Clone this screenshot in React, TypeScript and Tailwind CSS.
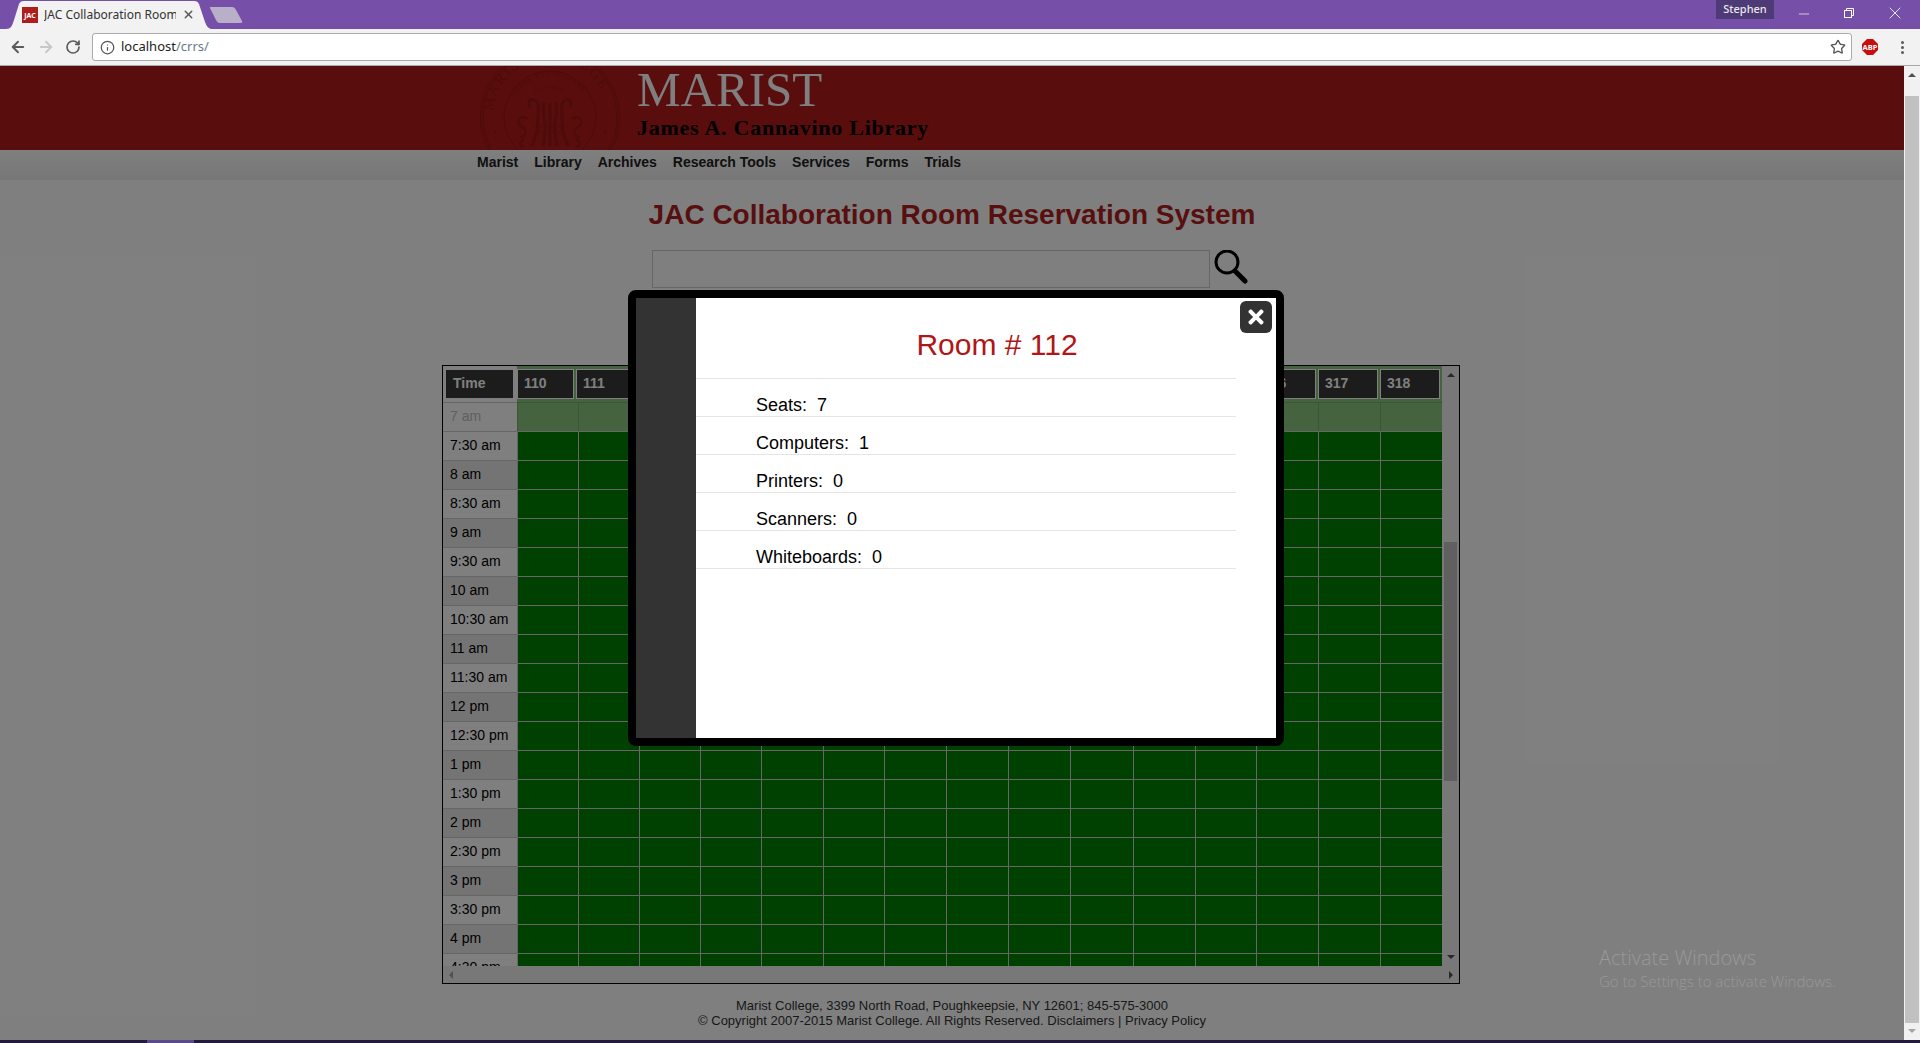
import React from 'react';
import { ArrowLeft, ArrowRight, RotateCw, Star, Info, X, Minus } from 'lucide-react';
import { FaTimes } from 'react-icons/fa';

const times = [
  '7 am', '7:30 am', '8 am', '8:30 am', '9 am', '9:30 am', '10 am', '10:30 am', '11 am', '11:30 am', '12 pm',
  '12:30 pm', '1 pm', '1:30 pm', '2 pm', '2:30 pm', '3 pm', '3:30 pm', '4 pm', '4:30 pm', '5 pm',
];
const rooms = ['110', '111', '112', '113', '114', '115', '116', '117', '312', '313', '314', '315', '316', '317', '318'];
const amenities = [
  ['Seats', 7],
  ['Computers', 1],
  ['Printers', 0],
  ['Scanners', 0],
  ['Whiteboards', 0],
];
const navLinks = ['Marist', 'Library', 'Archives', 'Research Tools', 'Services', 'Forms', 'Trials'];

const gridCols =
  'grid grid-cols-[74px_61px_61px_61px_61px_62px_61px_62px_62px_62px_63px_62px_61px_62px_62px_62px]';
const headCols =
  'grid grid-cols-[74px_59px_63px_61px_61px_62px_61px_62px_62px_62px_63px_62px_61px_62px_62px_62px]';

const BrowserChrome: React.FC = () => (
  <div className="font-['Noto_Sans',sans-serif]">
    {/* Tab strip */}
    <div className="relative h-[29px] bg-[#7650a8]">
      <svg className="absolute left-0 top-0" width="250" height="29" viewBox="0 0 250 29">
        <path d="M6 29 C11 29 12 26 14 20 L19 4 C20 2 21 1 24 1 L194 1 C197 1 198 2 199 4 L205 22 C207 27 209 29 212 29 Z" fill="#f2f2f2" />
        <path d="M210 8 C209.500 7.500 210 7 211 7 L232 7 C234 7 235 8 236 10 L242 21 C242.500 22 242 23 241 23 L220 23 C218 23 217 22 216 20 Z" fill="#b9afc9" />
      </svg>
      <div className="absolute left-[22px] top-[7px] flex h-4 w-4 items-center justify-center bg-[#b01c1c] text-[7px] font-bold leading-none text-white">
        JAC
      </div>
      <div className="absolute left-[44px] top-[6px] w-[132px] overflow-hidden whitespace-nowrap text-[12px] leading-[17px] text-[#333]">
        JAC Collaboration Rooms
      </div>
      <X className="absolute left-[182px] top-[8px] h-[13px] w-[13px] text-[#555]" strokeWidth={2.5} />
      <div className="absolute left-[1716px] top-0 flex h-[19px] w-[58px] items-center justify-center bg-[#4f3a78] text-[11px] font-medium text-[#e8e8e8]">
        Stephen
      </div>
      <Minus className="absolute left-[1796px] top-[6px] h-4 w-4 text-white" strokeWidth={1} />
      <svg className="absolute left-[1844px] top-[8px]" width="10" height="10" viewBox="0 0 10 10" fill="none" stroke="white">
        <path d="M2.500 2.500 V0.500 H9.500 V7.500 H7.500" />
        <rect x="0.500" y="2.500" width="7" height="7" />
      </svg>
      <X className="absolute left-[1885px] top-[3px] h-[20px] w-[20px] text-white" strokeWidth={1} />
    </div>
    {/* Toolbar */}
    <div className="flex h-[37px] items-center border-b border-[#a8a8a8] bg-[#f2f2f2] pl-[9px]">
      <ArrowLeft className="h-[18px] w-[18px] text-[#5a5a5a]" strokeWidth={2.5} />
      <ArrowRight className="ml-[10px] h-[18px] w-[18px] text-[#c8c8c8]" strokeWidth={2.5} />
      <RotateCw className="ml-[10px] h-[16px] w-[16px] text-[#5a5a5a]" strokeWidth={2.5} />
      <div className="ml-[11px] flex h-[28px] w-[1760px] items-center rounded-[3px] border border-[#aaa] bg-white pl-[7px]">
        <Info className="h-[15px] w-[15px] text-[#555]" strokeWidth={2} />
        <span className="ml-[6px] text-[13px] text-[#222]">localhost</span>
        <span className="text-[13px] text-[#6a7a85]">/crrs/</span>
        <Star className="ml-auto mr-[5px] h-4 w-4 text-[#555]" strokeWidth={2} />
      </div>
      <svg className="ml-[10px]" width="16" height="16" viewBox="0 0 16 16">
        <polygon points="5,0 11,0 16,5 16,11 11,16 5,16 0,11 0,5" fill="#c70d0d" />
        <text x="8" y="11" textAnchor="middle" fontSize="7.500" fontWeight="bold" fill="white">ABP</text>
      </svg>
      <div className="ml-[23px] flex flex-col gap-[2px]">
        <div className="h-[3px] w-[3px] rounded-full bg-[#5a5a5a]" />
        <div className="h-[3px] w-[3px] rounded-full bg-[#5a5a5a]" />
        <div className="h-[3px] w-[3px] rounded-full bg-[#5a5a5a]" />
      </div>
    </div>
  </div>
);

const Seal: React.FC = () => (
  <svg className="absolute left-[480px] top-[-19px]" width="140" height="140" viewBox="0 0 140 140" fill="none" stroke="#9c1616">
    <defs>
      <path id="outerRing" d="M12 70 A58 58 0 0 1 128 70" />
      <path id="innerRing" d="M29 70 A41 41 0 0 1 111 70" />
    </defs>
    <circle cx="70" cy="70" r="69.500" />
    <circle cx="70" cy="70" r="67" />
    <circle cx="70" cy="70" r="46" />
    <text fontFamily="'Liberation Serif', serif" fontSize="15" fill="#9c1616" stroke="none" letterSpacing="1.500">
      <textPath href="#outerRing" startOffset="3%">MARIST COLLEGE</textPath>
    </text>
    <text fontFamily="'Liberation Sans', sans-serif" fontSize="6" fill="#9c1616" stroke="none" letterSpacing="1">
      <textPath href="#innerRing" startOffset="16%">ORARE ET LABORARE</textPath>
    </text>
    <path d="M55 44 Q70 37 85 44" strokeWidth="1.500" strokeDasharray="1.500 3" />
    <path d="M50 60 C46 52 54 50 57 55 C61 62 56 72 58 82 L52 99 M64 55 C62 64 66 74 65 84 L63 99 M70 56 V99 M76 55 C78 64 74 74 75 84 L77 99 M90 60 C94 52 86 50 83 55 C79 62 84 72 82 82 L88 99" strokeWidth="3" />
    <path d="M54 80 H86 M54 85 H86" strokeWidth="1" strokeDasharray="3 3" />
    <path d="M48 72 C40 66 35 76 42 80 C48 83 46 90 40 90 M92 72 C100 66 105 76 98 80 C92 83 94 90 100 90 M44 92 C38 96 40 100 44 99 M96 92 C102 96 100 100 96 99" strokeWidth="2.200" />
    <circle cx="15" cy="85" r="1.500" fill="#9c1616" stroke="none" />
    <circle cx="125" cy="85" r="1.500" fill="#9c1616" stroke="none" />
  </svg>
);

const RoomGrid: React.FC = () => (
  <div className="ml-[442px] flex h-[619px] w-[1018px] flex-col border border-black">
    <div className="flex h-[600px]">
      <div className="w-[999px] overflow-hidden">
        {/* Column headers */}
        <div className={`${headCols} h-9 bg-[#8cc67e]`}>
          <div className="bg-white py-[3px] pl-[2px] pr-[3px]">
            <div className="flex h-[30px] items-center border border-white bg-[#383838] pb-[2px] pl-[7px] text-[14px] font-bold text-white">Time</div>
          </div>
          {rooms.map(room => (
            <div key={room} className="py-[3px] pr-[2px]">
              <div className="flex h-[30px] items-center border border-white bg-[#383838] pb-[2px] pl-[6px] text-[14px] font-bold text-white">{room}</div>
            </div>
          ))}
        </div>
        {/* Time rows */}
        {times.map((time, i) => (
          <div key={time} className={`${gridCols} h-[29px]`}>
            <div className={`flex items-center border-t border-[#ccc] pb-[2px] pl-[7px] text-[14px] ${i === 0 ? 'bg-white text-[#c0c0c0]' : i % 2 === 1 ? 'bg-white text-black' : 'bg-[#e8e8e8] text-black'}`}>
              {time}
            </div>
            {rooms.map(room => (
              <div key={room} className={i === 0 ? 'border-l border-t border-[#76ac6c] bg-[#8cc67e]' : 'border-l border-t border-[#ccc] bg-[#008000]'} />
            ))}
          </div>
        ))}
      </div>
      {/* Vertical scrollbar */}
      <div className="flex w-[17px] flex-col items-center bg-[#f1f1f1] pt-[7px]">
        <div className="h-0 w-0 border-x-[4px] border-b-[4px] border-x-transparent border-b-[#505050]" />
        <div className="mt-[165px] h-[239px] w-[13px] bg-[#c1c1c1]" />
        <div className="mt-[174px] h-0 w-0 border-x-[4px] border-t-[4px] border-x-transparent border-t-[#505050]" />
      </div>
    </div>
    {/* Horizontal scrollbar */}
    <div className="flex h-[17px] items-center justify-between bg-[#f1f1f1] px-[6px]">
      <div className="h-0 w-0 border-y-[4px] border-r-[4px] border-y-transparent border-r-[#a3a3a3]" />
      <div className="h-0 w-0 border-y-[4px] border-l-[4px] border-y-transparent border-l-[#505050]" />
    </div>
  </div>
);

const RoomModal: React.FC = () => (
  <div className="absolute left-[628px] top-[224px] flex h-[456px] w-[656px] rounded-lg border-8 border-black">
    <div className="w-[60px] bg-[#333]" />
    <div className="relative flex-1 bg-white">
      <div className="h-[81px] w-[540px] border-b border-[#e5e5e5] pl-[62px] pt-[28px] text-center text-[30px] leading-[37px] text-[#b01616]">
        Room # 112
      </div>
      {amenities.map(([name, value]) => (
        <div key={name} className="h-[38px] w-[540px] border-b border-[#e5e5e5] pl-[60px] pt-[16px] text-[18px] leading-[20px] text-black">
          {name}:&nbsp; {value}
        </div>
      ))}
      <button className="absolute right-[4px] top-[3px] flex h-8 w-8 items-center justify-center rounded-md bg-[#333] text-white">
        <FaTimes className="h-[22px] w-[22px]" />
      </button>
    </div>
  </div>
);

const App: React.FC = () => (
  <div className="flex h-[1043px] w-full flex-col overflow-hidden bg-white font-['Liberation_Sans',sans-serif]">
    <BrowserChrome />
    <div className="flex h-[974px]">
      <div className="relative w-[1904px]">
        {/* Marist header */}
        <div className="relative h-[84px] overflow-hidden bg-[#b21a1a] pl-[637px] font-['Liberation_Serif',serif]">
          <Seal />
          <div className="relative text-[49px] leading-[48px] text-white">MARIST</div>
          <div className="relative mt-[2px] text-[22px] font-bold leading-[24px] tracking-[0.75px] text-black">James A. Cannavino Library</div>
        </div>
        {/* Nav */}
        <div className="flex h-[30px] items-center gap-4 bg-gradient-to-b from-[#ffffff] to-[#eeeeee] pb-[6px] pl-[477px] text-[14px] font-bold text-[#222]">
          {navLinks.map(link => (
            <span key={link}>{link}</span>
          ))}
        </div>
        <h1 className="mt-[18px] text-center text-[28px] font-bold leading-[34px] text-[#ae1e1e]">
          JAC Collaboration Room Reservation System
        </h1>
        <div className="ml-[652px] mt-[18px] flex items-start">
          <div className="h-[38px] w-[558px] border border-[#ccc]" />
          <svg className="ml-[3px]" width="36" height="34" viewBox="0 0 36 34" fill="none" stroke="black">
            <circle cx="14" cy="12" r="11" strokeWidth="3" />
            <path d="M22 21 L32 31" strokeWidth="5" strokeLinecap="round" />
          </svg>
        </div>
        <div className="mt-[77px]">
          <RoomGrid />
        </div>
        {/* Footer */}
        <div className="mt-[14px] text-center text-[13px] leading-[15px] text-[#333]">
          <p>Marist College, 3399 North Road, Poughkeepsie, NY 12601; 845-575-3000</p>
          <p>© Copyright 2007-2015 Marist College. All Rights Reserved. Disclaimers | Privacy Policy</p>
        </div>
        {/* Dimmed backdrop */}
        <div className="absolute inset-0 bg-black/50" />
        <RoomModal />
        <div className="absolute left-[1599px] top-[878px] font-['Open_Sans',sans-serif] text-[#999]">
          <p className="text-[20px] font-light leading-[28px]">Activate Windows</p>
          <p className="text-[15px] font-light leading-[18px]">Go to Settings to activate Windows.</p>
        </div>
      </div>
      {/* Page scrollbar */}
      <div className="flex w-4 flex-col items-center bg-[#f1f1f1] pt-[7px]">
        <div className="h-0 w-0 border-x-[4px] border-b-[4px] border-x-transparent border-b-[#505050]" />
        <div className="mt-[19px] h-[927px] w-[14px] bg-[#c1c1c1]" />
        <div className="mt-[6px] h-0 w-0 border-x-[4px] border-t-[4px] border-x-transparent border-t-[#a3a3a3]" />
      </div>
    </div>
    {/* Taskbar edge */}
    <div className="h-[3px] bg-[#241a3a]">
      <div className="ml-[147px] h-full w-[47px] bg-[#5a4a8a]" />
    </div>
  </div>
);

export default App;
